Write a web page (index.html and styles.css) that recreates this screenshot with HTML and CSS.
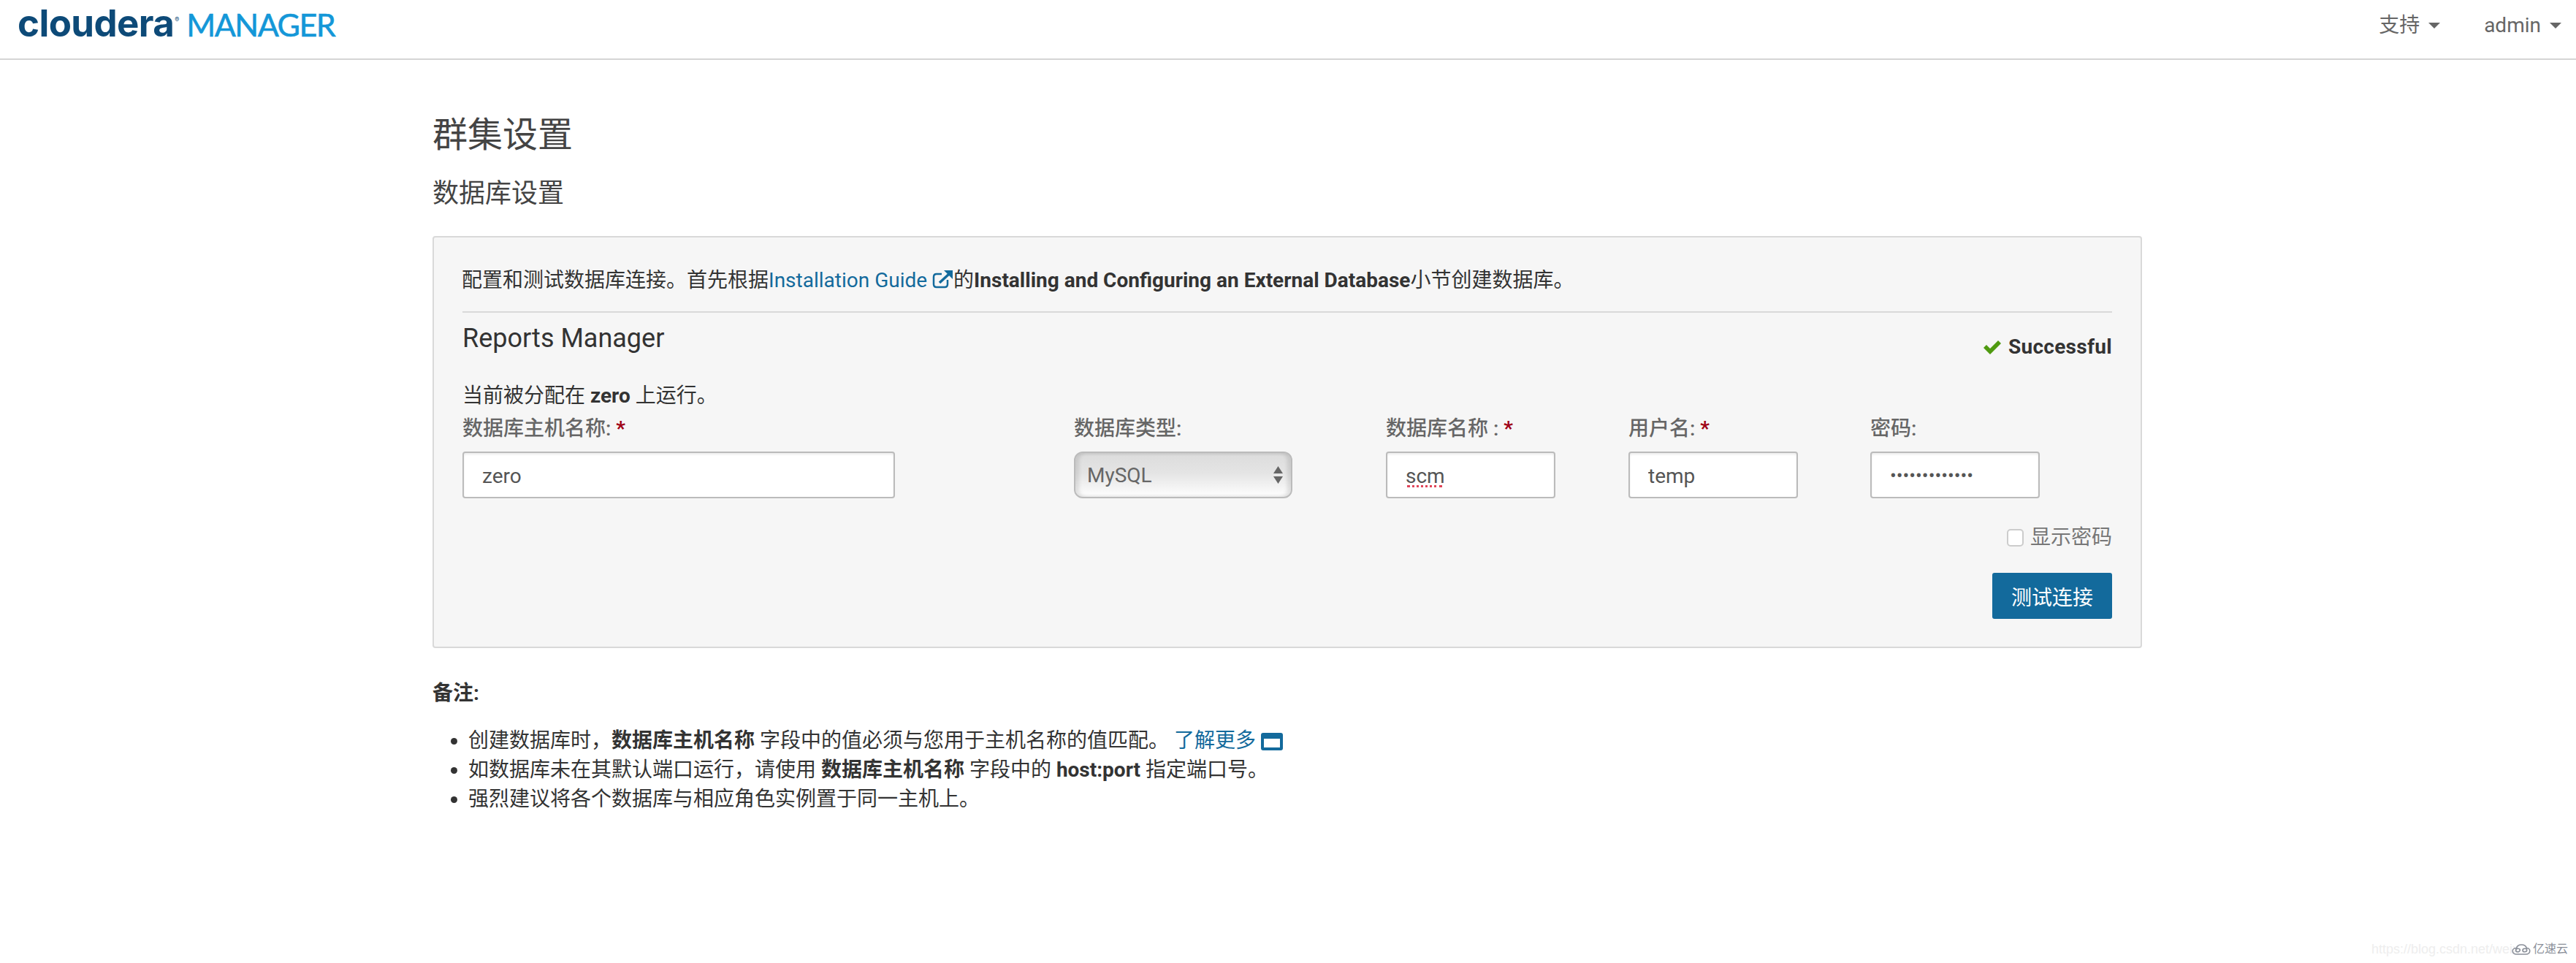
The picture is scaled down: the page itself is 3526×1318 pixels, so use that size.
FILE: index.html
```html
<!DOCTYPE html>
<html lang="zh-CN">

<head>
    <meta charset="UTF-8">
    <meta name="viewport" content="width=device-width, initial-scale=1.0">
    <title>群集设置 | Cloudera Manager</title>
    <link rel="stylesheet" href="styles.css">
</head>

<body>
    <!-- 导航栏 -->
    <nav class="nav-bar">
        <a href="#" class="logo">
            <span class="logo-name">cloudera<sup class="logo-reg">®</sup></span>
            <span class="logo-product">MANAGER</span>
        </a>
        <div class="nav-menu">
            <a href="#" class="nav-item nav-cn">支持<span class="caret"></span></a>
            <a href="#" class="nav-item">admin<span class="caret"></span></a>
        </div>
    </nav>

    <main class="page">
        <h1 class="page-title">群集设置</h1>
        <h2 class="page-subtitle">数据库设置</h2>

        <!-- 数据库设置面板 -->
        <section class="panel">
            <p class="panel-intro">配置和测试数据库连接。首先根据<a href="#" class="link">Installation Guide<svg class="icon-external" viewBox="0 0 29 25"><path d="M13 5H6Q2 5 2 9V19Q2 23 6 23H17Q21 23 21 19V13" fill="none" stroke="currentColor" stroke-width="2.500"/><path d="M10 17 23 5" fill="none" stroke="currentColor" stroke-width="3.500"/><path d="M16 0H28V12Z" fill="currentColor"/></svg></a>的<strong>Installing and Configuring an External Database</strong>小节创建数据库。</p>

            <div class="service-head">
                <h3 class="service-name">Reports Manager</h3>
                <div class="status">
                    <svg class="icon-check" viewBox="0 0 26 20"><path d="M1 11 5 7 10 12 21 1 25 5 10 20Z" fill="currentColor"/></svg>
                    Successful
                </div>
            </div>

            <p class="service-host">当前被分配在 <strong>zero</strong> 上运行。</p>

            <form class="db-form">
                <div class="field">
                    <label for="dbHost">数据库主机名称: <span class="required">*</span></label>
                    <input type="text" id="dbHost" class="text-input host-input" value="zero">
                </div>
                <div class="field">
                    <label for="dbType">数据库类型:</label>
                    <div class="select-wrap">
                        <select id="dbType" class="select-input">
                            <option>MySQL</option>
                        </select>
                        <svg class="select-arrows" viewBox="0 0 13 24"><path d="M6.500 0 13 10H0Z M0 14H13L6.500 24Z" fill="currentColor"/></svg>
                    </div>
                </div>
                <div class="field">
                    <label for="dbName">数据库名称 : <span class="required">*</span></label>
                    <div class="spell-wrap">
                        <input type="text" id="dbName" class="text-input" value="scm">
                        <span class="spell-mark"></span>
                    </div>
                </div>
                <div class="field">
                    <label for="dbUser">用户名: <span class="required">*</span></label>
                    <input type="text" id="dbUser" class="text-input" value="temp">
                </div>
                <div class="field">
                    <label for="dbPass">密码:</label>
                    <input type="password" id="dbPass" class="text-input pass-input" value="temptemptempt">
                </div>

                <div class="form-actions">
                    <label class="show-pass"><input type="checkbox" class="show-pass-box">显示密码</label>
                    <button type="button" class="test-btn">测试连接</button>
                </div>
            </form>
        </section>

        <!-- 备注 -->
        <p class="note-title">备注:</p>
        <ul class="note-list">
            <li>创建数据库时，<strong>数据库主机名称</strong> 字段中的值必须与您用于主机名称的值匹配。 <a href="#" class="link">了解更多<svg class="icon-window" viewBox="0 0 30 24"><path fill-rule="evenodd" d="M3 0H27Q30 0 30 3V21Q30 24 27 24H3Q0 24 0 21V3Q0 0 3 0ZM4 8V20H26V8Z" fill="currentColor"/></svg></a></li>
            <li>如数据库未在其默认端口运行，请使用 <strong>数据库主机名称</strong> 字段中的 <strong>host:port</strong> 指定端口号。</li>
            <li>强烈建议将各个数据库与相应角色实例置于同一主机上。</li>
        </ul>
    </main>

    <!-- 水印 -->
    <div class="watermark">
        <span class="watermark-url">https://blog.csdn.net/weix</span>
        <svg class="watermark-cloud" viewBox="0 0 32 20"><path d="M8 18H24C28 18 30.500 15.500 30.500 12.500S28 7.500 25 7.500C24 4 20.500 2 16.500 2S9 4 8 7.500C4.500 7.500 1.500 9.500 1.500 12.500S4 18 8 18Z M10 14C12 14 14 12.500 14 11S12 8.500 10 8.500 7 10 7 11.500 8.500 14 10 14Z M22 14C24 14 25.500 12.500 25.500 11S24 8.500 22 8.500 18.500 10 18.500 11.500 20 14 22 14Z" fill="none" stroke="currentColor" stroke-width="2"/></svg>
        <span class="watermark-brand">亿速云</span>
    </div>
</body>

</html>
```

FILE: styles.css
```css
:root {
    --text-dark: #333;
    --text-muted: #666;
    --link-color: #136a9c;
    --border-color: #d9d9d9;
    --input-border: #bbb;
    --required-color: #a00016;
}

* {
    margin: 0;
    padding: 0;
    box-sizing: border-box;
    font-family: Roboto, 'Noto Sans CJK SC', sans-serif;
}

html,
body {
    height: 100%;
}

body {
    position: relative;
    background: white;
    color: var(--text-dark);
    font-size: 28px;
    line-height: 40px;
    overflow: hidden;
}

strong {
    font-weight: 700;
}

.link {
    color: var(--link-color);
    text-decoration: none;
}

/* 导航栏 */
.nav-bar {
    display: flex;
    justify-content: space-between;
    height: 82px;
    padding: 0 20px 0 24px;
    border-bottom: 2px solid #d5d5d5;
}

.logo {
    display: flex;
    align-items: baseline;
    gap: 10px;
    height: 58px;
    padding-top: 6px;
    text-decoration: none;
    line-height: 52px;
}

.logo-name {
    color: #0d4a78;
    font-family: Inter, sans-serif;
    font-size: 51px;
    font-weight: 700;
    letter-spacing: -0.600px;
}

.logo-reg {
    font-family: Inter, sans-serif;
    font-size: 9px;
    font-weight: 400;
    line-height: 0;
    vertical-align: 20px;
    letter-spacing: 0;
    margin-left: 1px;
}

.logo-product {
    color: #1497d8;
    font-family: Lato, sans-serif;
    font-size: 43px;
    font-weight: 400;
    letter-spacing: -1.500px;
    -webkit-text-stroke: 0.600px #1497d8;
}

.nav-menu {
    display: flex;
    gap: 60px;
    padding-top: 15px;
}

.nav-item {
    color: var(--text-muted);
    font-size: 28px;
    text-decoration: none;
    height: 40px;
}

.caret {
    display: inline-block;
    margin-left: 12px;
    vertical-align: 5px;
    border-top: 8px solid var(--text-muted);
    border-left: 8px solid transparent;
    border-right: 8px solid transparent;
}

/* 主内容 */
.page {
    width: 2340px;
    margin-left: 592px;
}

.page-title {
    margin-top: 72px;
    color: #444;
    font-size: 48px;
    font-weight: 400;
    line-height: 62px;
}

.page-subtitle {
    margin-top: 24px;
    color: #444;
    font-size: 36px;
    font-weight: 400;
    line-height: 50px;
}

.panel {
    margin-top: 33px;
    height: 564px;
    padding: 39px 39px 0;
    background: #f6f6f6;
    border: 2px solid var(--border-color);
    border-radius: 4px;
}

.panel-intro {
    padding-bottom: 22px;
    border-bottom: 2px solid var(--border-color);
    text-indent: -1px;
    white-space: nowrap;
}

.icon-external {
    width: 29px;
    height: 25px;
    margin-left: 7px;
    vertical-align: -2px;
}

.service-head {
    display: flex;
    justify-content: space-between;
}

.service-name {
    margin-top: 13px;
    font-size: 36px;
    font-weight: 400;
    line-height: 44px;
}

.status {
    display: flex;
    align-items: center;
    gap: 9px;
    margin-top: 27px;
    height: 40px;
    font-weight: 700;
    font-size: 28px;
    letter-spacing: 0.300px;
}

.icon-check {
    width: 26px;
    height: 20px;
    color: #4f9a10;
}

.service-host {
    margin-top: 27px;
}

/* 表单 */
.db-form {
    display: grid;
    grid-template-columns: 837px 427px 332px 331px 1fr;
}

.field {
    padding-top: 5px;
}

.field label {
    display: block;
    height: 51px;
    color: var(--text-muted);
    font-weight: 500;
    line-height: 40px;
}

.required {
    color: var(--required-color);
    font-weight: 700;
}

.text-input {
    display: block;
    width: 232px;
    height: 64px;
    padding: 2px 25px 0;
    background: white;
    border: 2px solid var(--input-border);
    border-radius: 4px;
    box-shadow: inset 0 2px 3px rgba(0, 0, 0, 0.08);
    color: #555;
    font-size: 28px;
    outline: none;
}

.host-input {
    width: 592px;
}

.pass-input {
    font-size: 26px;
    letter-spacing: 0;
}

.spell-wrap {
    position: relative;
    width: 232px;
}

.spell-mark {
    position: absolute;
    left: 29px;
    top: 46px;
    width: 48px;
    border-top: 3px dotted #e0455a;
}

.select-wrap {
    position: relative;
    width: 299px;
}

.select-input {
    display: block;
    width: 100%;
    height: 64px;
    padding: 1px 16px 0;
    appearance: none;
    background: linear-gradient(#dcdcdc, #e4e4e4 45%, #f2f2f2 75%, white);
    border: 2px solid var(--input-border);
    border-radius: 12px;
    box-shadow: inset 5px 0 5px rgba(0, 0, 0, 0.1), inset -5px 0 5px rgba(0, 0, 0, 0.1);
    color: var(--text-muted);
    font-size: 28px;
    outline: none;
}

.select-arrows {
    position: absolute;
    right: 13px;
    top: 20px;
    width: 13px;
    height: 24px;
    color: #666;
}

.form-actions {
    grid-column: 1 / -1;
    display: flex;
    flex-direction: column;
    align-items: flex-end;
}

.show-pass {
    display: flex;
    align-items: center;
    gap: 9px;
    margin-top: 34px;
    color: #777;
    line-height: 40px;
}

.show-pass-box {
    width: 23px;
    height: 24px;
    appearance: none;
    background: white;
    border: 2px solid #ccc;
    border-radius: 5px;
}

.test-btn {
    width: 164px;
    height: 63px;
    margin-top: 28px;
    background: var(--link-color);
    border: none;
    border-radius: 3px;
    color: white;
    font-size: 28px;
}

/* 备注 */
.note-title {
    margin-top: 42px;
    font-weight: 700;
}

.note-list {
    margin-top: 25px;
    padding-left: 49px;
}

.icon-window {
    width: 30px;
    height: 24px;
    margin-left: 7px;
    vertical-align: -4px;
}

/* 水印 */
.watermark {
    position: absolute;
    right: 11px;
    bottom: 9px;
    display: flex;
    align-items: center;
    font-size: 16px;
    line-height: 20px;
}

.watermark-url {
    width: 192px;
    color: #eeeeee;
    font-family: 'Liberation Sans', sans-serif;
    font-size: 18px;
}

.watermark-cloud {
    width: 26px;
    height: 17px;
    margin-right: 3px;
    color: #8a8f99;
}

.watermark-brand {
    color: #8a8f99;
}
```
